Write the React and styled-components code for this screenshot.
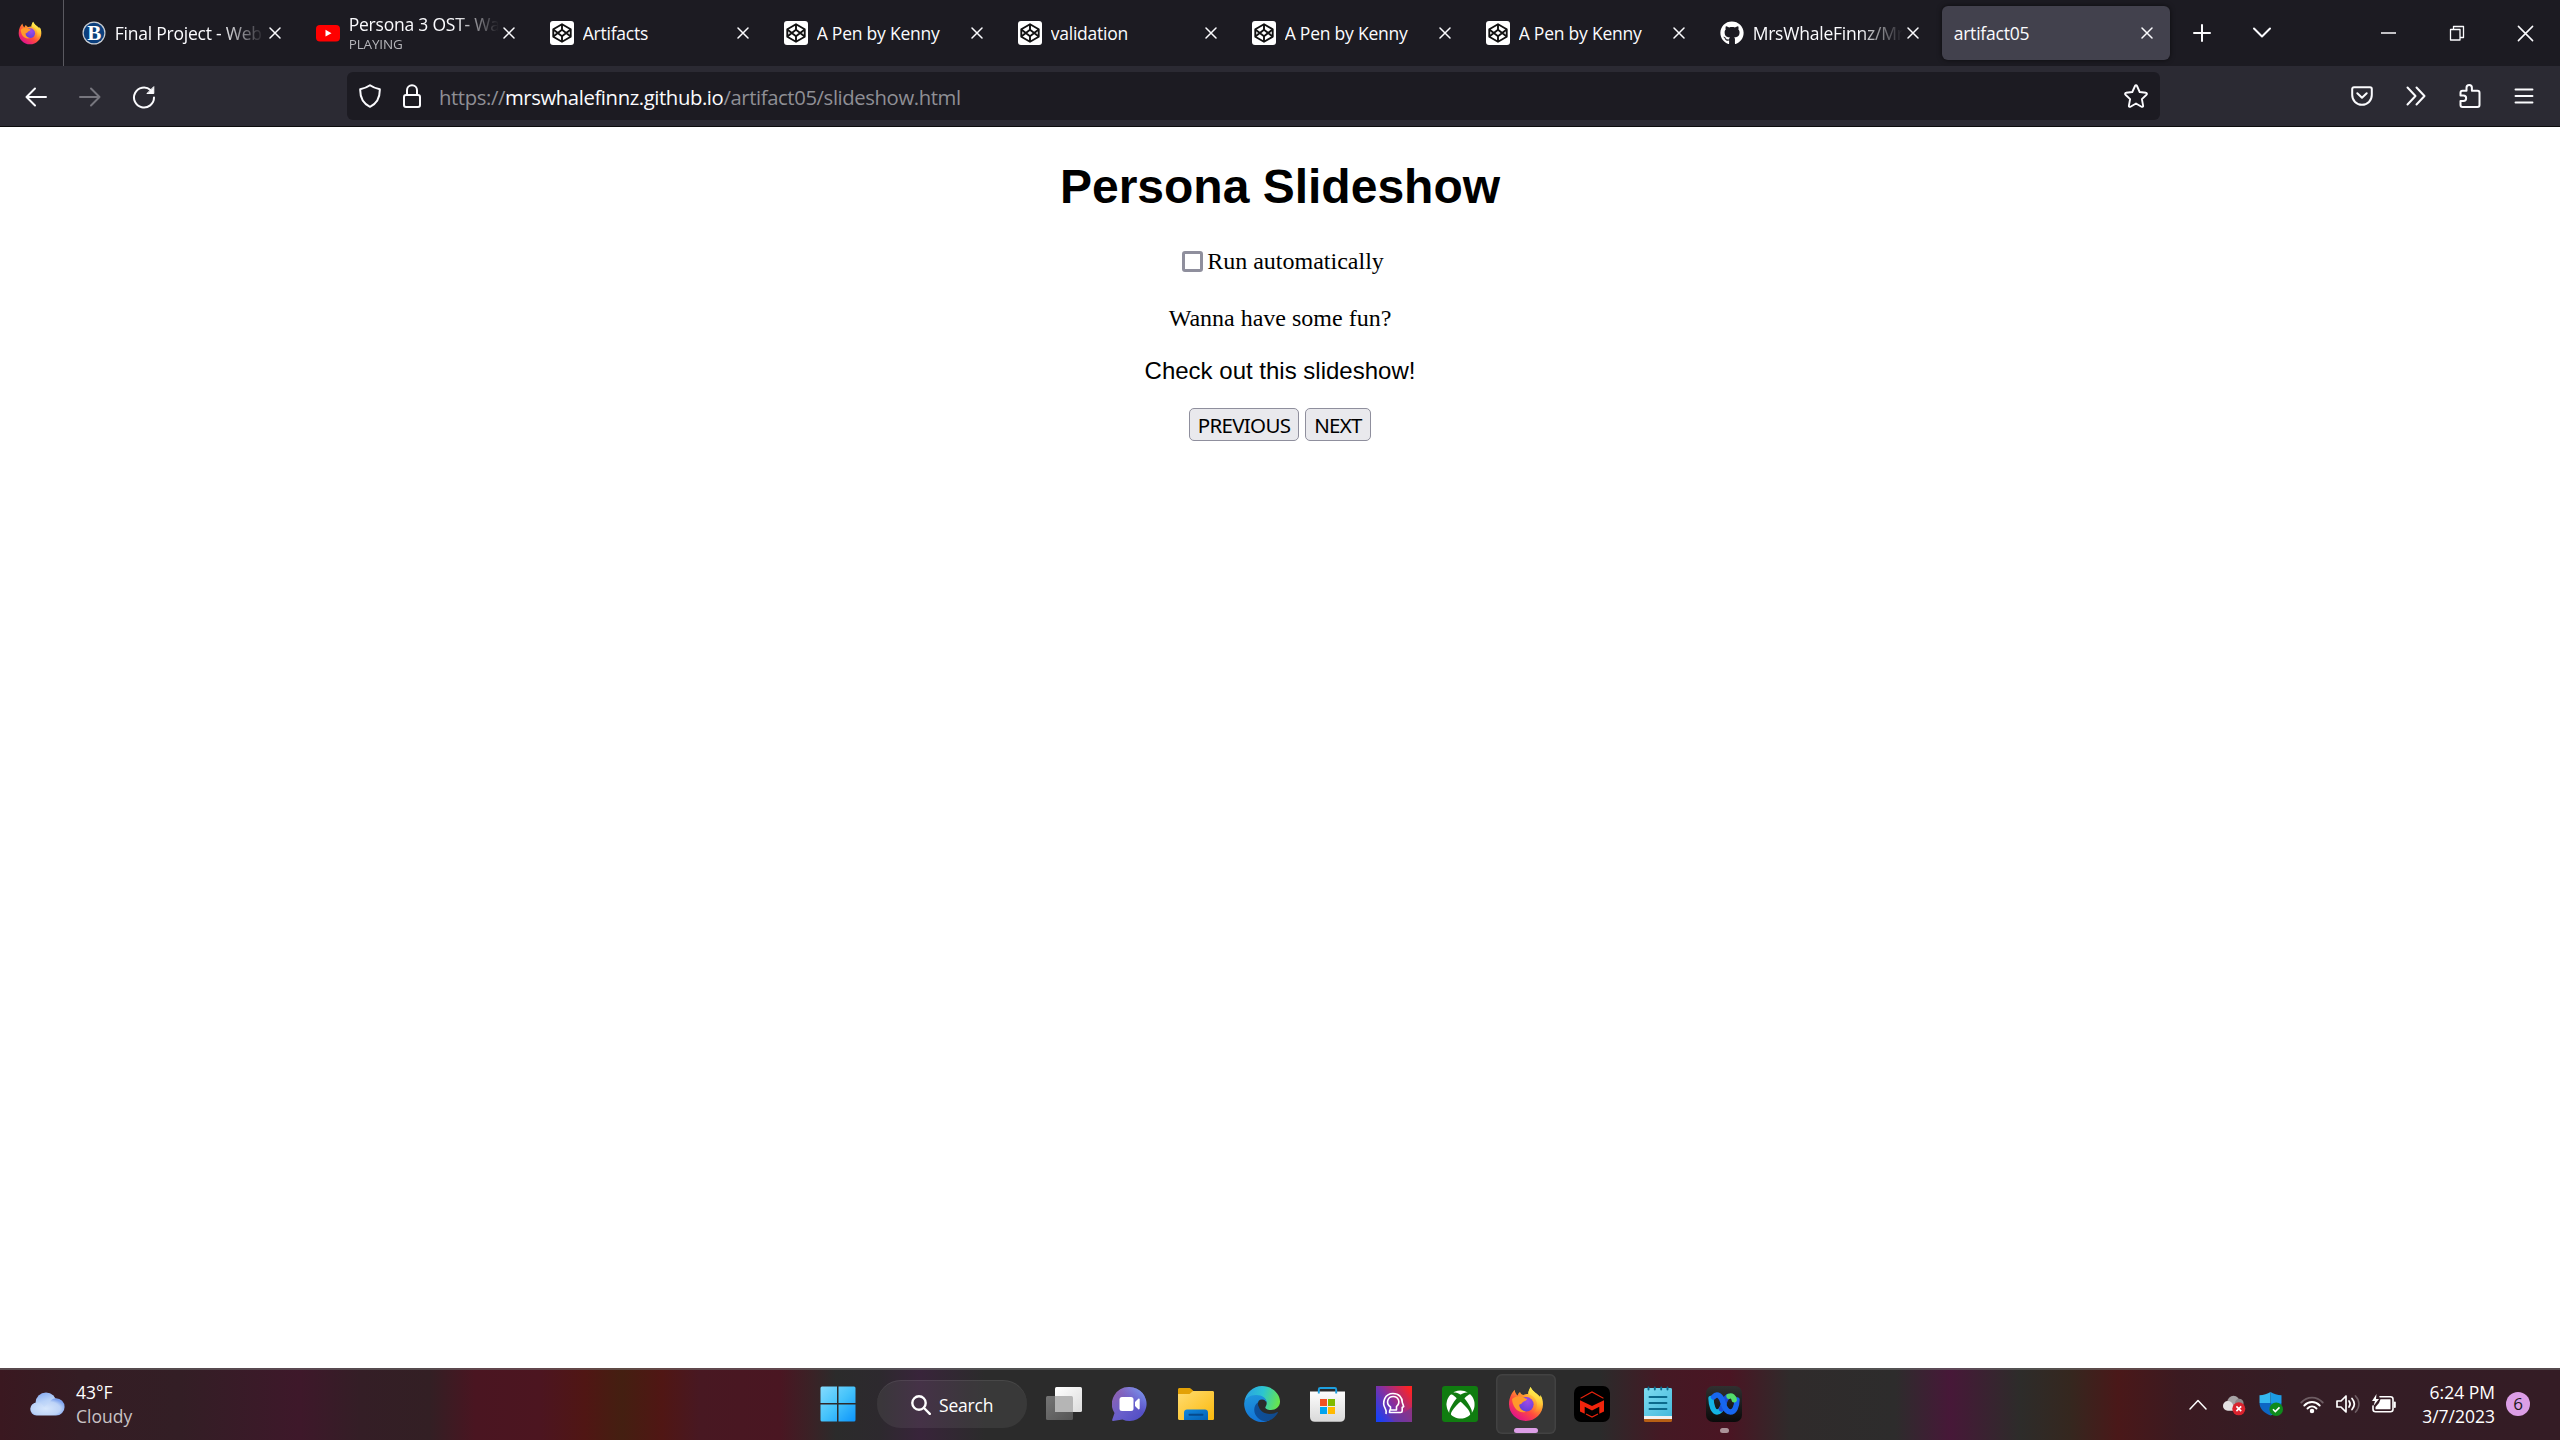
import React, { useState } from "react";
import styled, { createGlobalStyle, css } from "styled-components";
import { FaGithub, FaXbox } from "react-icons/fa";

const Global = createGlobalStyle`
  html, body { margin: 0; padding: 0; background: #fff; overflow: hidden; }
  * { box-sizing: border-box; }
`;

const ui = `"Open Sans", "Noto Sans", sans-serif`;

const Screen = styled.div`
  display: flex;
  flex-direction: column;
  width: 2560px;
  height: 1440px;
  background: #fff;
  font-family: ${ui};
`;

/* ---------- tab strip ---------- */

const TabStrip = styled.header`
  display: flex;
  align-items: center;
  height: 66px;
  flex: none;
  background: #1c1b22;
`;

const HomeTab = styled.div`
  display: flex;
  align-items: center;
  justify-content: center;
  width: 64px;
  height: 66px;
  padding-right: 3px;
  border-right: 1px solid #5a5960;
`;

const TabList = styled.div`
  display: flex;
  gap: 6px;
  padding-left: 6px;
`;

const Tab = styled.div`
  display: flex;
  align-items: center;
  width: 228px;
  height: 54px;
  padding: 0 14px 0 12px;
  border-radius: 6px;
  color: #fbfbfe;
  ${(p) => p.$active && css`
    background: #42414d;
    box-shadow: 0 0 5px rgba(0, 0, 0, 0.6);
  `}
`;

const Favicon = styled.span`
  display: flex;
  width: 24px;
  height: 24px;
  margin-right: 9px;
  flex: none;
`;

const TabText = styled.div`
  flex: 1;
  min-width: 0;
  overflow: hidden;
  white-space: nowrap;
  margin-right: 1px;
  padding-top: ${(p) => (p.$stacked ? 2 : 0)}px;
  ${(p) => p.$fade && css`
    mask-image: linear-gradient(to right, #000 calc(100% - 44px), transparent 100%);
  `}
`;

const TabTitle = styled.div`
  font-size: 17.5px;
  line-height: ${(p) => (p.$tight ? 20 : 24)}px;
  letter-spacing: -0.22px;
`;

const TabStatus = styled.div`
  font-size: 13.5px;
  line-height: 20px;
  color: #b5b5ba;
  letter-spacing: -0.15px;
`;

const CloseMark = styled.span`
  display: flex;
  justify-content: center;
  width: 18px;
  flex: none;
`;

const StripButton = styled.span`
  display: flex;
  align-items: center;
  justify-content: center;
  width: ${(p) => p.$w}px;
  height: 66px;
  margin-left: ${(p) => p.$ml || 0}px;
`;

/* ---------- navigation bar ---------- */

const NavBar = styled.nav`
  display: flex;
  align-items: center;
  height: 61px;
  flex: none;
  padding: 0 8px 0 9px;
  background: #2b2a33;
  border-bottom: 1px solid #0c0c0d;
`;

const NavButton = styled.span`
  display: flex;
  align-items: center;
  justify-content: center;
  width: 54px;
  height: 48px;
  padding-top: ${(p) => (p.$raised ? 0 : 2)}px;
`;

const AddressBar = styled.div`
  display: flex;
  align-items: center;
  width: 1813px;
  height: 48px;
  margin: 0 175px 0 176px;
  padding: 0 12px;
  border-radius: 6px;
  background: #1c1b22;
`;

const Url = styled.div`
  flex: 1;
  margin-left: 18px;
  padding-top: 2px;
  font-size: 20.3px;
  line-height: 30px;
  letter-spacing: -0.4px;
  color: #8f8f95;
  white-space: nowrap;
`;

const Host = styled.span`
  color: #fbfbfe;
`;

const AddressIcon = styled.span`
  display: flex;
  justify-content: center;
  width: ${(p) => p.$w || 24}px;
  margin-right: ${(p) => p.$mr || 0}px;
`;

/* ---------- web page ---------- */

const Page = styled.main`
  flex: 1;
  display: flex;
  flex-direction: column;
  align-items: center;
  padding-top: 32px;
  background: #fff;
  color: #000;
  font: 24px/27px "Liberation Serif", "Times New Roman", serif;
`;

const Heading = styled.h1`
  margin: 0;
  font: bold 48px/55px "Liberation Sans", Arial, sans-serif;
`;

const AutoRun = styled.label`
  display: flex;
  align-items: center;
  margin: 34px 0 0 6px;
`;

const Box = styled.input`
  appearance: none;
  width: 21px;
  height: 21px;
  margin: 0 4px 0 0;
  border: 3px solid #8f8f9d;
  border-radius: 3px;
  background: #fff;
`;

const Line = styled.p`
  margin: ${(p) => p.$mt}px 0 0;
  ${(p) => p.$sans && css`font-family: "Liberation Sans", Arial, sans-serif;`}
`;

const Buttons = styled.div`
  display: flex;
  gap: 6px;
  margin-top: 24px;
`;

const PushButton = styled.button`
  width: ${(p) => p.$w}px;
  height: 33px;
  padding: 1px 0 0;
  border: 1px solid #8f8f9d;
  border-radius: 5px;
  background: #e9e9ed;
  color: #000;
  font: 20.5px/30px "Noto Sans", sans-serif;
  letter-spacing: -0.7px;
`;

/* ---------- taskbar ---------- */

const Taskbar = styled.footer`
  display: grid;
  grid-template-columns: 808px 1fr auto;
  align-items: center;
  height: 72px;
  flex: none;
  border-top: 2px solid rgba(120, 120, 120, 0.5);
  color: #fff;
  background: linear-gradient(
    to right,
    #3a1820 0, #341d24 80px, #331e25 180px, #3e182a 300px, #341e26 360px,
    #331f24 430px, #4a1521 475px, #4c1520 540px, #501614 585px, #441f11 622px,
    #501614 662px, #481822 700px, #4a1622 780px, #3a2226 812px, #2b2b2b 836px,
    #2d292e 880px, #38243a 920px, #2b2b2b 985px, #2b2b2b 1600px, #441924 1660px,
    #4a1523 1730px, #2f2b2b 1790px, #2d2c2c 1895px, #471838 1950px, #2d2c2a 2020px,
    #35271f 2070px, #4a1819 2118px, #3b1a21 2180px, #341d25 2290px, #341c25 2560px
  );
  background-origin: border-box;
`;

const Weather = styled.div`
  display: flex;
  align-items: center;
  gap: 11px;
  padding: 0 0 3px 29px;
`;

const TwoLines = styled.div`
  font-size: 17.5px;
  line-height: 24px;
  text-align: ${(p) => p.$align || "left"};
`;

const Muted = styled.div`
  color: #c9c3c5;
`;

const Apps = styled.div`
  display: flex;
  align-items: center;
  gap: 6px;
  height: 70px;
`;

const AppSlot = styled.div`
  display: flex;
  position: relative;
  align-items: center;
  justify-content: center;
  width: 60px;
  height: 60px;
  margin-bottom: 2px;
  border-radius: 6px;
  ${(p) => p.$active && css`
    background: rgba(255, 255, 255, 0.06);
    box-shadow: inset 0 0 0 1.5px rgba(255, 255, 255, 0.06);
  `}
  &::after {
    content: "";
    display: ${(p) => (p.$mark ? "block" : "none")};
    position: absolute;
    bottom: 1px;
    left: calc(50% - ${(p) => p.$mark / 2 || 0}px);
    width: ${(p) => p.$mark || 0}px;
    height: 5px;
    border-radius: 3px;
    background: ${(p) => (p.$active ? "#dc9ee6" : "#ac9399")};
  }
`;

const SearchPill = styled.div`
  display: flex;
  align-items: center;
  gap: 8px;
  width: 150px;
  height: 48px;
  margin: 0 1px 2px 3px;
  padding-left: 34px;
  border-radius: 24px;
  background: rgba(255, 255, 255, 0.065);
  border-top: 1px solid rgba(255, 255, 255, 0.08);
  font-size: 17.5px;
  letter-spacing: -0.2px;
`;

const Tray = styled.div`
  display: flex;
  align-items: center;
  padding: 0 30px 2px 0;
`;

const TrayIcon = styled.span`
  display: flex;
  justify-content: center;
  width: ${(p) => p.$w}px;
  margin-right: ${(p) => p.$mr || 0}px;
`;

const Badge = styled.span`
  width: 24px;
  height: 24px;
  margin-left: 11px;
  border-radius: 50%;
  background: #dc9ee6;
  color: #1b1b1b;
  font-size: 17px;
  line-height: 23px;
  text-align: center;
`;

/* ---------- drawings ---------- */

const Stroke = ({ w, h, box, sw = 1.8, color = "#fbfbfe", children }) => (
  <svg width={w} height={h} viewBox={box || `0 0 ${w} ${h}`} fill="none" stroke={color}
    strokeWidth={sw} strokeLinecap="round" strokeLinejoin="round">{children}</svg>
);

const X = ({ size = 12, sw = 1.5 }) => (
  <Stroke w={size} h={size} box="0 0 12 12" sw={sw}><path d="M1 1l10 10M11 1L1 11" /></Stroke>
);

const Firefox = ({ size, id }) => (
  <svg width={size} height={size} viewBox="0 0 36 36">
    <defs>
      <linearGradient id={id + "a"} x1="0.85" y1="0.1" x2="0.2" y2="0.95">
        <stop offset="0.05" stopColor="#fff44f" />
        <stop offset="0.35" stopColor="#ff9a2e" />
        <stop offset="0.62" stopColor="#ff4a3f" />
        <stop offset="0.95" stopColor="#e31587" />
      </linearGradient>
      <linearGradient id={id + "b"} x1="0.6" y1="0" x2="0.4" y2="1">
        <stop offset="0" stopColor="#fff85a" />
        <stop offset="0.5" stopColor="#ffd03a" />
        <stop offset="1" stopColor="#ff8a1e" stopOpacity="0" />
      </linearGradient>
      <radialGradient id={id + "c"} cx="0.6" cy="0.3" r="0.8">
        <stop offset="0" stopColor="#a04be8" />
        <stop offset="1" stopColor="#5a3fd6" />
      </radialGradient>
    </defs>
    <path fill={`url(#${id}a)`} d="M22.6 1c-1.2 2.4-2.4 4.4-2.3 7.2-2-.3-3.7.2-5 .9-1.7-.5-2.7-1.3-3.3-3-1.4.8-2 2.2-2.2 3.5C8.3 8.8 7 6.5 6.6 3.800 4 6.600 1 11.600 1 18.300 1 27.500 8.600 35 18 35s17-7.500 17-16.700c0-4-1-7-2.800-9.300.2 1.100.2 2 .1 2.800C30.300 7.600 25 6.700 22.600 1z" />
    <path fill={`url(#${id}b)`} d="M22.600 1c-1.200 2.400-2.400 4.400-2.300 7.200 5.500 1.300 8.700 5.400 8.700 10.400 0 4-2 7-4.500 9C31 26.500 34.700 21.500 34 14.500c-.2-2-.8-3.900-1.800-5.500.2 1.100.2 2 .1 2.800C30.300 7.600 25 6.700 22.600 1z" />
    <circle cx="18.300" cy="18.300" r="7.300" fill={`url(#${id}c)`} />
    <path fill="#ff9a2b" d="M4 13c3-2.400 6-3.200 8.800-2.500 2.200 0 3.400 1.800 6.200 2.200.3 1.500-3 2.500-4.200 3.400-.8 1.400-1.800 2.200-3.700 2.600.2 3.400 3 6.400 7 6.900C10.500 28.200 4.500 21.500 4 13z" />
  </svg>
);

const Crest = () => (
  <svg width="24" height="24" viewBox="0 0 24 24">
    <circle cx="12" cy="12" r="11.500" fill="#c9cdd2" />
    <circle cx="12" cy="12" r="10.300" fill="#0b3f7d" />
    <text x="12.300" y="19" fontFamily="Liberation Serif, serif" fontWeight="bold" fontSize="21"
      fill="#fff" textAnchor="middle">B</text>
  </svg>
);

const YouTube = () => (
  <svg width="24" height="24" viewBox="0 0 24 24">
    <rect x="0" y="4" width="24" height="16.500" rx="4" fill="#f00" />
    <path d="M9.500 8.800v6.800l6-3.400z" fill="#fff" />
  </svg>
);

const CodePen = () => (
  <svg width="24" height="24" viewBox="0 0 24 24">
    <rect width="24" height="24" rx="3" fill="#fff" />
    <g fill="none" stroke="#111" strokeWidth="1.900" strokeLinejoin="round">
      <path d="M12 3.200l8.700 5v7.600l-8.700 5-8.700-5V8.200z" />
      <path d="M12 3.200v5.600M12 15.200v5.600M3.300 8.400L12 15.200l8.700-6.800M3.300 15.600L12 8.800l8.700 6.800" />
    </g>
  </svg>
);

const CloudIcon = () => (
  <svg width="36" height="24" viewBox="0 0 36 24">
    <defs>
      <linearGradient id="cl" x1="0" y1="0" x2="0.300" y2="1">
        <stop offset="0" stopColor="#7fa5f0" />
        <stop offset="0.500" stopColor="#b9d2f8" />
        <stop offset="1" stopColor="#d9e7fc" />
      </linearGradient>
      <radialGradient id="cl2" cx="0.450" cy="0.600" r="0.600">
        <stop offset="0" stopColor="#d6e6fc" />
        <stop offset="0.700" stopColor="#bdd3f7" />
        <stop offset="1" stopColor="#7da2ee" />
      </radialGradient>
    </defs>
    <circle cx="17" cy="11" r="10.500" fill="url(#cl)" />
    <path d="M8 10.500c4 0 6 2 7 4.500l5-4c1.500-3 4-4.700 7-4.700a8.600 8.600 0 0 1 0 17.200H7.500a6.500 6.500 0 0 1 .5-13z" fill="url(#cl2)" />
  </svg>
);

const StartLogo = () => (
  <svg width="36" height="36" viewBox="0 0 36 36">
    <defs>
      <linearGradient id="st" gradientUnits="userSpaceOnUse" x1="0" y1="0" x2="36" y2="36">
        <stop offset="0" stopColor="#86dcfe" />
        <stop offset="0.500" stopColor="#45c3fb" />
        <stop offset="1" stopColor="#0a93fb" />
      </linearGradient>
    </defs>
    <path fill="url(#st)" d="M2 .5h15v16.500H.500V2A1.500 1.500 0 0 1 2 .5zM18.500.5H34A1.500 1.500 0 0 1 35.500 2v15h-17zM.5 18.500H17v17H2A1.500 1.500 0 0 1 .5 34zM18.500 18.500h17V34a1.500 1.500 0 0 1-1.500 1.500H18.500z" />
  </svg>
);

const TaskView = () => (
  <svg width="36" height="36" viewBox="0 0 36 36">
    <defs>
      <linearGradient id="tv" x1="0" y1="0" x2="1" y2="1">
        <stop offset="0" stopColor="#fff" /><stop offset="1" stopColor="#dcdcdc" />
      </linearGradient>
      <linearGradient id="tv2" x1="0" y1="0" x2="1" y2="1">
        <stop offset="0" stopColor="#757575" /><stop offset="1" stopColor="#555" />
      </linearGradient>
    </defs>
    <rect x="0" y="10" width="27" height="24" rx="1.500" fill="url(#tv2)" />
    <rect x="9" y="1" width="27" height="25" rx="1.500" fill="url(#tv)" />
    <path d="M9 10h16.500a1.500 1.500 0 0 1 1.500 1.500V26H9z" fill="#b5b5b5" />
  </svg>
);

const Chat = () => (
  <svg width="36" height="36" viewBox="0 0 36 36">
    <defs>
      <linearGradient id="ch" x1="0.100" y1="0.200" x2="0.800" y2="0.900">
        <stop offset="0" stopColor="#8a62b4" /><stop offset="0.500" stopColor="#6a5fcb" /><stop offset="1" stopColor="#5450c6" />
      </linearGradient>
      <linearGradient id="ch2" x1="0.400" y1="0.700" x2="1" y2="0">
        <stop offset="0.300" stopColor="#7b83eb" stopOpacity="0" /><stop offset="1" stopColor="#7fb0f5" />
      </linearGradient>
    </defs>
    <path fill="url(#ch)" d="M17.500 1a17 17 0 1 1-7 32.500L1 35c-.8 0-1-.6-.8-1.200L2.500 27A17 17 0 0 1 17.500 1z" />
    <path fill="url(#ch2)" d="M17.500 1a17 17 0 1 1-7 32.500L1 35c-.8 0-1-.6-.8-1.200L2.500 27A17 17 0 0 1 17.500 1z" />
    <rect x="7.500" y="11" width="14" height="14" rx="2.500" fill="#fff" />
    <path fill="#fff" d="M23 16l3.300-3.200c.6-.5 1.400-.2 1.400.6v9.200c0 .8-.8 1.100-1.400.6L23 20z" />
  </svg>
);

const Explorer = () => (
  <svg width="36" height="36" viewBox="0 0 36 36">
    <defs>
      <linearGradient id="ex" x1="0" y1="0" x2="1" y2="1">
        <stop offset="0" stopColor="#ffdc71" /><stop offset="1" stopColor="#fbb90c" />
      </linearGradient>
      <linearGradient id="ex2" x1="0" y1="0" x2="1" y2="1">
        <stop offset="0" stopColor="#1188dd" /><stop offset="1" stopColor="#0560b4" />
      </linearGradient>
    </defs>
    <path fill="#e3a106" d="M1.500 2H11c1 0 1.500.3 2 .8L15.500 5v5H0V3.500C0 2.600.6 2 1.500 2z" />
    <path fill="url(#ex)" d="M0 8h11.500L15 5h19.500c1 0 1.500.6 1.500 1.500v26c0 1-.6 1.500-1.500 1.500h-33C.6 34 0 33.400 0 32.500z" />
    <path fill="url(#ex2)" d="M6 34v-7.500C6 24.500 7.300 23.500 9 23.500h18c1.700 0 3 1 3 3V34z" />
    <path stroke="#064a8c" strokeWidth="2" strokeLinecap="round" d="M11.500 28.700h13" />
  </svg>
);

const Edge = () => (
  <svg width="36" height="36" viewBox="0 0 36 36">
    <defs>
      <linearGradient id="ed1" x1="0" y1="0.300" x2="1" y2="0.500">
        <stop offset="0" stopColor="#2a9fe6" /><stop offset="0.500" stopColor="#2cc5d0" /><stop offset="1" stopColor="#67e54d" />
      </linearGradient>
      <linearGradient id="ed2" x1="0.300" y1="0" x2="0.500" y2="1">
        <stop offset="0" stopColor="#1f95dc" /><stop offset="1" stopColor="#1273d6" />
      </linearGradient>
      <linearGradient id="ed3" x1="0" y1="0.500" x2="1" y2="0.500">
        <stop offset="0" stopColor="#0c4f9c" /><stop offset="1" stopColor="#114a8b" />
      </linearGradient>
    </defs>
    <path fill="url(#ed1)" d="M.3 16C1.500 7 9 0 18 0c10.500 0 18 8 18 15.500 0 5.500-4.500 8.500-9 8.500-4 0-5.700-1.500-5.700-2.700 0-.8 1.400-1.500 1.400-4.300 0-3.500-4-7-10-7C6.500 10 1.500 13 .3 16z" />
    <path fill="url(#ed2)" d="M.2 17C1 12.500 6 9 12 9c6.500 0 10.600 3.500 10.700 7.500-2-3-7.700-2.500-9 2.500-1.500 7 4 14.500 12 15.300A18 18 0 0 1 .2 17z" />
    <path fill="url(#ed3)" d="M14.500 16c-1 3 .5 11.500 11 12 3.500.1 6-1 7.500-1.800.7-.3 1 .2.700.7C31 31.500 27 34.500 22 35.400 14 35 9 28 10.500 21.500c.6-2.600 2-4.500 4-5.500z" />
    <circle cx="18" cy="17.500" r="4" fill="#2b2b2b" />
  </svg>
);

const Store = () => (
  <svg width="36" height="36" viewBox="0 0 36 36">
    <defs>
      <linearGradient id="so" x1="0" y1="0" x2="0" y2="1">
        <stop offset="0" stopColor="#fdfdfd" /><stop offset="1" stopColor="#d9d9d9" />
      </linearGradient>
    </defs>
    <path fill="url(#so)" d="M0 5.500h35V31c0 3-1.800 4.800-4.800 4.800H4.800C1.800 35.800 0 34 0 31z" />
    <path fill="none" stroke="#1da0e0" strokeWidth="1.900" d="M8.800 7.500V3.500c0-1 .6-1.500 1.500-1.500h14.400c.9 0 1.500.5 1.500 1.500v4" />
    <path fill="#f25022" d="M10 13h7v7h-7z" /><path fill="#7fba00" d="M18 13h7v7h-7z" />
    <path fill="#00a4ef" d="M10 21h7v7h-7z" /><path fill="#ffb900" d="M18 21h7v7h-7z" />
  </svg>
);

const HeadApp = () => (
  <svg width="36" height="36" viewBox="0 0 36 36">
    <defs>
      <linearGradient id="hd" x1="0" y1="0.850" x2="1" y2="0.150">
        <stop offset="0" stopColor="#1740f5" /><stop offset="0.500" stopColor="#8a2f9c" /><stop offset="1" stopColor="#ff2323" />
      </linearGradient>
    </defs>
    <rect width="36" height="36" fill="url(#hd)" />
    <path d="M12 29l16-2 8-6v15H19z" fill="#6a3a98" opacity="0.600" />
    <g fill="none" stroke="#fff" strokeWidth="1.600" strokeLinejoin="round">
      <path d="M10 28c.5-2 .4-3.500-.7-5.300C5.500 16 9 7.500 17 7.500c6 0 9.300 4 9.300 9l1.400 4-1.500 1v3.500c0 1.200-.7 1.500-1.700 1.500H13.500l.3-3" />
      <path d="M14.500 24v-3c-5.500-4-2.500-10.500 2.700-10.500S25 16.500 20.500 20.500V24z" />
    </g>
  </svg>
);

const XboxTile = styled.span`
  display: flex;
  align-items: center;
  justify-content: center;
  width: 36px;
  height: 36px;
  border-radius: 3px;
  background: #107c10;
  color: #fff;
`;

const McAfee = () => (
  <svg width="36" height="36" viewBox="0 0 36 36">
    <rect width="36" height="36" rx="7" fill="#000" />
    <path d="M7 12.500v-.5L18 6l11 6v.5M12 28l6 3 6-3" fill="none" stroke="#e8220c" strokeWidth="1.200" />
    <path d="M6 14.200l12 5.800 12-5.800v11.300l-4.700 2.300V20.800L18 24.500l-7.300-3.700v7L6 25.500z" fill="#f0240c" />
  </svg>
);

const Notepad = () => (
  <svg width="36" height="36" viewBox="0 0 36 36">
    <defs>
      <linearGradient id="np" x1="0" y1="0" x2="1" y2="1">
        <stop offset="0" stopColor="#7edcf0" /><stop offset="1" stopColor="#45b9dc" />
      </linearGradient>
    </defs>
    <rect x="4" y="29" width="28" height="7" rx="1.500" fill="#b85f14" />
    <path d="M4 30h28v3H4z" fill="#f1f1f1" />
    <path d="M5.500 2h25c1 0 1.500.6 1.500 1.500V30H4V3.500C4 2.600 4.600 2 5.500 2z" fill="url(#np)" />
    <path d="M8.500 1.500v2M14.800 1.500v2M21.200 1.500v2M27.500 1.500v2M9.500 11h17M9.500 17h17M9.500 23h17" stroke="#0b6a8c" strokeWidth="1.900" strokeLinecap="round" />
  </svg>
);

const Webex = () => (
  <svg width="36" height="36" viewBox="0 0 36 36">
    <defs>
      <linearGradient id="wx0" x1="0" y1="0" x2="0" y2="1">
        <stop offset="0" stopColor="#303030" /><stop offset="1" stopColor="#0a0a0a" />
      </linearGradient>
    </defs>
    <rect width="36" height="36" rx="7" fill="url(#wx0)" />
    <g fill="none" strokeWidth="5.400" strokeLinecap="round">
      <path stroke="#14b4e4" d="M5 12.500C5.200 20 7.500 26 11 26c3.500 0 5.500-4 7-8.500" />
      <path stroke="#1c50d8" d="M15.500 23c3-4.500 2.700-10.500 6.500-12.500" />
      <path stroke="#1767f0" d="M7.500 11c4-4.500 8-.5 9.500 5.500C18.500 22 20.500 26 24.500 26c4 0 6.300-5.500 6.500-12" />
      <path stroke="#53dc6b" d="M23 10.200c3-1 4.700.8 5.200 3.600" />
    </g>
  </svg>
);

const CloudError = () => (
  <svg width="25" height="24" viewBox="0 0 25 24">
    <circle cx="12" cy="10" r="6.500" fill="#a7a3a5" />
    <circle cx="18" cy="11" r="4.500" fill="#8d888a" />
    <path d="M6 9c3 0 5 2 5.500 4l3 6H6A5 5 0 0 1 6 9z" fill="#e4e2e3" />
    <circle cx="17.500" cy="17" r="6.800" fill="#d9232e" />
    <path d="M15 14.500l5 5M20 14.500l-5 5" stroke="#fff" strokeWidth="1.700" />
  </svg>
);

const Defender = () => (
  <svg width="24" height="24" viewBox="0 0 24 24">
    <path d="M11.500 0C8.500 2 4.500 3.200.5 3.200V11h11z" fill="#35b8f0" />
    <path d="M11.500 0c3 2 7 3.200 11 3.200V11h-11z" fill="#1c9ce4" />
    <path d="M.5 11h11v12.500C5 21 .5 16.500.500 11z" fill="#0c66c4" />
    <path d="M11.500 11h11c0 5.500-4.500 10-11 12.500z" fill="#0a84dc" />
    <circle cx="17.200" cy="17.200" r="6.800" fill="#0f8a1c" />
    <path d="M14 17.300l2.300 2.300 4.200-4.200" fill="none" stroke="#fff" strokeWidth="1.600" />
  </svg>
);

const Wifi = () => (
  <Stroke w={24} h={20} sw={1.900} color="#fff">
    <path d="M1.300 8.500c6-6.500 15.400-6.500 21.400 0" stroke="#6d5c62" />
    <path d="M4.300 11.500c4.500-4.600 10.900-4.600 15.400 0M7.500 14.500c2.700-2.600 6.300-2.600 9 0" />
    <circle cx="12" cy="17" r="1.300" fill="#fff" />
  </Stroke>
);

const Volume = () => (
  <Stroke w={24} h={20} sw={1.700} color="#fff">
    <path d="M1 7h4l5-5v16l-5-5H1z" />
    <path d="M13 7c1.500 2 1.500 4 0 6M16 4.500c3 3.500 3 7.500 0 11" />
    <path d="M19.500 2c4.500 5 4.500 11 0 16" stroke="#6d5c62" />
  </Stroke>
);

const Battery = () => (
  <Stroke w={24} h={20} sw={1.600} color="#fff">
    <path d="M8 2.800h10.500c1.500 0 2.500 1 2.500 2.500v10c0 1.500-1 2.500-2.500 2.500h-15C2 17.800 1 16.800 1 15.300V12" />
    <path d="M8.500 5.300h10v10h-15V13L7 9z" fill="#fff" stroke="none" />
    <path d="M4.500 0L0 7h3l-1.500 5L7 5H4z" fill="#fff" stroke="none" />
    <path d="M22.800 8.500V13" strokeWidth="2" />
  </Stroke>
);

/* ---------- data ---------- */

const tabs = [
  { title: "Final Project - Web", icon: <Crest />, fade: true },
  { title: "Persona 3 OST- Wa", icon: <YouTube />, status: "PLAYING", fade: true },
  { title: "Artifacts", icon: <CodePen /> },
  { title: "A Pen by Kenny", icon: <CodePen /> },
  { title: "validation", icon: <CodePen /> },
  { title: "A Pen by Kenny", icon: <CodePen /> },
  { title: "A Pen by Kenny", icon: <CodePen /> },
  { title: "MrsWhaleFinnz/Mr", icon: <FaGithub size={24} color="#fff" />, fade: true },
  { title: "artifact05", active: true },
];

export default function App() {
  const [auto, setAuto] = useState(false);
  return (
    <Screen>
      <Global />
      <TabStrip>
        <HomeTab><Firefox size={24} id="f1" /></HomeTab>
        <TabList>
          {tabs.map((t, i) => (
            <Tab key={i} $active={t.active}>
              {t.icon && <Favicon>{t.icon}</Favicon>}
              <TabText $fade={t.fade} $stacked={!!t.status}>
                <TabTitle $tight={!!t.status}>{t.title}</TabTitle>
                {t.status && <TabStatus>{t.status}</TabStatus>}
              </TabText>
              <CloseMark><X /></CloseMark>
            </Tab>
          ))}
        </TabList>
        <StripButton $w={48} $ml={8}>
          <Stroke w={18} h={18} sw={2}><path d="M9 1v16M1 9h16" /></Stroke>
        </StripButton>
        <StripButton $w={48} $ml={13}>
          <Stroke w={18} h={12} sw={2}><path d="M1 1.500l8 8 8-8" /></Stroke>
        </StripButton>
        <StripButton $w={69} $ml={68}>
          <Stroke w={15} h={2} sw={1.500}><path d="M0 1h15" /></Stroke>
        </StripButton>
        <StripButton $w={69}>
          <Stroke w={16} h={16} sw={1.300}><path d="M1.500 4.500h9.500v10.500H1.500zM4.500 4.500v-3H14.500v11H11" /></Stroke>
        </StripButton>
        <StripButton $w={69}><X size={17} sw={1.100} /></StripButton>
      </TabStrip>

      <NavBar>
        <NavButton>
          <Stroke w={22} h={20} sw={2}><path d="M21 10H1.500M10 1.500L1.500 10l8.500 8.500" /></Stroke>
        </NavButton>
        <NavButton>
          <Stroke w={22} h={20} sw={2} color="#77767e"><path d="M1 10h19.500M12 1.500l8.500 8.500-8.500 8.500" /></Stroke>
        </NavButton>
        <NavButton>
          <Stroke w={24} h={24} sw={2}>
            <path d="M22 12.500a10 10 0 1 1-3.500-7.600" />
            <path d="M21.800 2v6.500h-6.500z" fill="#fbfbfe" strokeWidth="1" />
          </Stroke>
        </NavButton>
        <AddressBar>
          <AddressIcon $w={22} $mr={22}>
            <Stroke w={22} h={24} sw={2}>
              <path d="M11 1.200c2.800 2 6 3.200 9.800 4C21 13 18 19.500 11 22.800 4 19.500 1 13 1.200 5.200 5 4.400 8.200 3.200 11 1.200z" />
            </Stroke>
          </AddressIcon>
          <AddressIcon $w={18}>
            <Stroke w={18} h={24} sw={2}>
              <rect x="1" y="11" width="16" height="12" rx="2" />
              <path d="M4 11V6.200a5 5 0 0 1 10 0V11" />
            </Stroke>
          </AddressIcon>
          <Url>https://<Host>mrswhalefinnz.github.io</Host>/artifact05/slideshow.html</Url>
          <AddressIcon>
            <Stroke w={24} h={24} sw={1.900}>
              <path d="M12 1.300c.5 0 .8.300 1 .7l2.700 6 6.200.8c1 .1 1.300 1.200.6 1.900l-4.600 4.400 1.200 6.500c.2 1-.8 1.600-1.600 1.100L12 19.500l-5.500 3.200c-.8.5-1.800-.1-1.600-1.100l1.200-6.500-4.600-4.400c-.7-.7-.4-1.800.6-1.900l6.200-.8L11 2c.2-.4.5-.7 1-.7z" />
            </Stroke>
          </AddressIcon>
        </AddressBar>
        <NavButton $raised>
          <Stroke w={22} h={20} sw={2}>
            <path d="M3 1.200h16c1.100 0 1.800.7 1.800 1.800v6c0 5.500-4.300 9.800-9.800 9.800S1.200 14.500 1.200 9V3c0-1.100.7-1.800 1.800-1.800z" />
            <path d="M6.300 7.200l4.700 4.600 4.700-4.600" />
          </Stroke>
        </NavButton>
        <NavButton $raised>
          <Stroke w={20} h={20} sw={2}><path d="M1.500 1.500L9.500 10l-8 8.500M10.500 1.500l8 8.500-8 8.500" /></Stroke>
        </NavButton>
        <NavButton $raised>
          <Stroke w={22} h={24} sw={2}>
            <path d="M7.500 6.800V3.700a2.700 2.700 0 0 1 5.400 0v3.100h5.600c1.200 0 2 .8 2 2v12.100c0 1.200-.8 2-2 2H3.500c-1.200 0-2-.8-2-2v-4h3a2.600 2.600 0 0 0 0-5.300h-3V8.800c0-1.200.8-2 2-2z" />
          </Stroke>
        </NavButton>
        <NavButton $raised>
          <Stroke w={20} h={18} sw={1.900}><path d="M1.500 2.500h17M1.500 9h17M1.500 15.500h17" /></Stroke>
        </NavButton>
      </NavBar>

      <Page>
        <Heading>Persona Slideshow</Heading>
        <AutoRun>
          <Box type="checkbox" checked={auto} onChange={() => setAuto(!auto)} />
          Run automatically
        </AutoRun>
        <Line $mt={30}>Wanna have some fun?</Line>
        <Line $mt={25} $sans>Check out this slideshow!</Line>
        <Buttons>
          <PushButton $w={110}>PREVIOUS</PushButton>
          <PushButton $w={66}>NEXT</PushButton>
        </Buttons>
      </Page>

      <Taskbar>
        <Weather>
          <CloudIcon />
          <TwoLines>43°F<Muted>Cloudy</Muted></TwoLines>
        </Weather>
        <Apps>
          <AppSlot><StartLogo /></AppSlot>
          <SearchPill>
            <Stroke w={20} h={20} sw={2.400} color="#fff"><circle cx="8" cy="8" r="6.700" /><path d="M13 13l5.800 5.800" /></Stroke>
            Search
          </SearchPill>
          <AppSlot><TaskView /></AppSlot>
          <AppSlot><Chat /></AppSlot>
          <AppSlot><Explorer /></AppSlot>
          <AppSlot><Edge /></AppSlot>
          <AppSlot><Store /></AppSlot>
          <AppSlot><HeadApp /></AppSlot>
          <AppSlot><XboxTile><FaXbox size={29} /></XboxTile></AppSlot>
          <AppSlot $active $mark={24}><Firefox size={36} id="f2" /></AppSlot>
          <AppSlot><McAfee /></AppSlot>
          <AppSlot><Notepad /></AppSlot>
          <AppSlot $mark={9}><Webex /></AppSlot>
        </Apps>
        <Tray>
          <TrayIcon $w={18} $mr={15}>
            <Stroke w={18} h={11} sw={1.500} color="#fff"><path d="M1 10l8-8.500 8 8.500" /></Stroke>
          </TrayIcon>
          <TrayIcon $w={24} $mr={13}><CloudError /></TrayIcon>
          <TrayIcon $w={24} $mr={17}><Defender /></TrayIcon>
          <TrayIcon $w={24} $mr={12}><Wifi /></TrayIcon>
          <TrayIcon $w={24} $mr={12}><Volume /></TrayIcon>
          <TrayIcon $w={24} $mr={26}><Battery /></TrayIcon>
          <TwoLines $align="right">6:24 PM<div>3/7/2023</div></TwoLines>
          <Badge>6</Badge>
        </Tray>
      </Taskbar>
    </Screen>
  );
}
